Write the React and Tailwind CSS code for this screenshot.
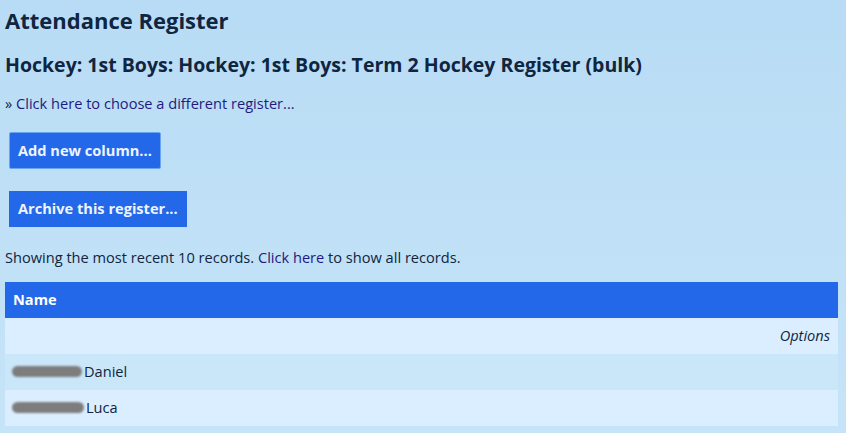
import React from 'react';

const rows = [
  { blur: 'w-[70px]', name: 'Daniel' },
  { blur: 'w-[72px]', name: 'Luca' },
];

const App = () => {
  return (
    <div className="min-h-[433px] bg-gradient-to-b from-[#b8dcf5] to-[#c6e4f8] px-[5px] pt-[6px] text-[#10253f] font-['Open_Sans',sans-serif]">
      <h1 className="text-[22px] font-bold leading-[28px]">Attendance Register</h1>
      <h2 className="mt-[18px] text-[19.5px] font-bold leading-[26px]">
        Hockey: 1st Boys: Hockey: 1st Boys: Term 2 Hockey Register (bulk)
      </h2>
      <p className="mt-[15px] text-[14.6px] leading-[20px]">
        » <a className="text-[#1f1a7f]">Click here to choose a different register...</a>
      </p>
      <div className="mt-[19px] flex flex-col items-start gap-[22px] pl-[4px]">
        <button className="h-[37px] border border-[#6aa4f0] bg-[#2368e8] px-[8px] text-[14.6px] font-bold text-[#eef4ff] rounded-[2px]">
          Add new column...
        </button>
        <button className="h-[36px] bg-[#2368e8] px-[9px] text-[14.6px] font-bold text-[#eef4ff]">
          Archive this register...
        </button>
      </div>
      <p className="mt-[20px] text-[14.6px] leading-[20px]">
        Showing the most recent 10 records. <a className="text-[#1f1a7f]">Click here</a> to show all records.
      </p>
      <table className="mt-[15px] w-[833px] text-[14.6px]">
        <thead>
          <tr className="bg-[#2368e8] text-white">
            <th className="h-[36px] px-[8px] text-left font-bold">Name</th>
          </tr>
        </thead>
        <tbody>
          <tr className="bg-[#dbeeff]">
            <td className="h-[36px] px-[8px] text-right italic">Options</td>
          </tr>
          {rows.map((r, i) => (
            <tr key={r.name} className={i % 2 === 0 ? 'bg-[#cae6f9]' : 'bg-[#dbeeff]'}>
              <td className="h-[36px] px-[7px]">
                <div className="flex items-center">
                  <span className={`inline-block h-[11px] ${r.blur} rounded-full bg-[#7d7d7d] blur-[1px]`}></span>
                  <span className="ml-[2px]">{r.name}</span>
                </div>
              </td>
            </tr>
          ))}
        </tbody>
      </table>
    </div>
  );
};

export default App;
